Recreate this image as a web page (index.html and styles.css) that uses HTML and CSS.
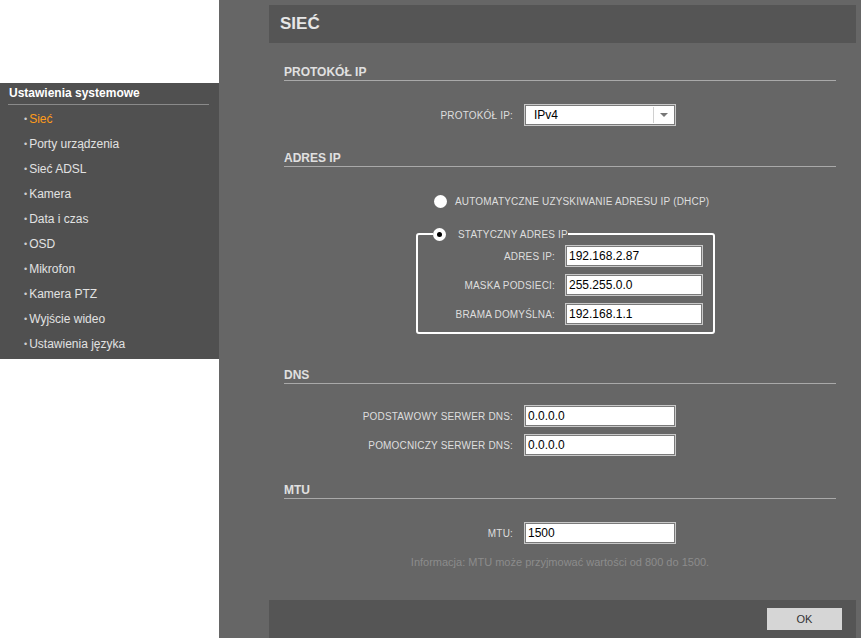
FILE: index.html
```html
<!DOCTYPE html>
<html lang="pl">
<head>
<meta charset="utf-8">
<title>Sieć</title>
<link rel="stylesheet" href="styles.css">
</head>
<body>
<div class="page">
  <aside class="side">
    <nav class="menu">
      <div class="menu-title">Ustawienia systemowe</div>
      <ul class="menu-list">
        <li class="menu-item active">Sieć</li>
        <li class="menu-item">Porty urządzenia</li>
        <li class="menu-item">Sieć ADSL</li>
        <li class="menu-item">Kamera</li>
        <li class="menu-item">Data i czas</li>
        <li class="menu-item">OSD</li>
        <li class="menu-item">Mikrofon</li>
        <li class="menu-item">Kamera PTZ</li>
        <li class="menu-item">Wyjście wideo</li>
        <li class="menu-item">Ustawienia języka</li>
      </ul>
    </nav>
  </aside>
  <main class="main">
    <header class="bar title-bar"><h1 class="title">SIEĆ</h1></header>
    <div class="content">
      <section class="sec sec-proto">
        <h2 class="sec-head">PROTOKÓŁ IP</h2>
        <div class="row row-first">
          <span class="lbl">PROTOKÓŁ IP:</span>
          <div class="select"><span class="select-val">IPv4</span><span class="select-btn"><span class="tri"></span></span></div>
        </div>
      </section>
      <section class="sec sec-addr">
        <h2 class="sec-head">ADRES IP</h2>
        <div class="radio-row">
          <span class="radio"></span><span class="radio-lbl">AUTOMATYCZNE UZYSKIWANIE ADRESU IP (DHCP)</span>
        </div>
        <fieldset class="static">
          <legend class="legend"><span class="radio on"></span><span class="radio-lbl">STATYCZNY ADRES IP</span></legend>
          <div class="frow"><span class="flbl">ADRES IP:</span><div class="field fsmall">192.168.2.87</div></div>
          <div class="frow"><span class="flbl">MASKA PODSIECI:</span><div class="field fsmall">255.255.0.0</div></div>
          <div class="frow"><span class="flbl">BRAMA DOMYŚLNA:</span><div class="field fsmall">192.168.1.1</div></div>
        </fieldset>
      </section>
      <section class="sec sec-dns">
        <h2 class="sec-head">DNS</h2>
        <div class="row row-first">
          <span class="lbl">PODSTAWOWY SERWER DNS:</span>
          <div class="field">0.0.0.0</div>
        </div>
        <div class="row">
          <span class="lbl">POMOCNICZY SERWER DNS:</span>
          <div class="field">0.0.0.0</div>
        </div>
      </section>
      <section class="sec sec-mtu">
        <h2 class="sec-head">MTU</h2>
        <div class="row row-first">
          <span class="lbl">MTU:</span>
          <div class="field">1500</div>
        </div>
        <p class="info">Informacja: MTU może przyjmować wartości od 800 do 1500.</p>
      </section>
    </div>
    <footer class="bar foot-bar"><button class="ok">OK</button></footer>
  </main>
</div>
</body>
</html>
```

FILE: styles.css
```css
* { box-sizing: border-box; }
html, body { margin: 0; padding: 0; }
body {
  font-family: "Liberation Sans", Arial, sans-serif;
  background: #ffffff;
  width: 861px;
  height: 638px;
  overflow: hidden;
}
.page { display: flex; height: 638px; }

.side { width: 219px; flex: none; background: #fff; padding-top: 83px; }
.menu { background: #505050; padding-bottom: 3px; }
.menu-title {
  margin: 0 10px 0 8px;
  padding: 1px 0 2px 1px;
  line-height: 18px;
  font-size: 12px;
  font-weight: bold;
  color: #ffffff;
  border-bottom: 1px solid #8a8a8a;
}
.menu-list { list-style: none; margin: 0; padding: 1px 0 0 0; }
.menu-item {
  display: flex;
  align-items: center;
  height: 25px;
  font-size: 12px;
  color: #e2e2e2;
  padding-left: 24px;
}
.menu-item::before { content: "•"; font-size: 9px; color: #cfcfcf; margin-right: 2px; }
.menu-item.active { color: #ff9c1a; }

.main {
  flex: 1;
  background: #666666;
  display: flex;
  flex-direction: column;
  padding: 5px 5px 0 50px;
}
.bar { background: #555555; }
.title-bar { height: 38px; display: flex; align-items: center; padding-left: 11px; }
.title { margin: 0; font-size: 17px; font-weight: bold; color: #e6e6e6; }

.content { flex: 1; padding: 0 20px 0 15px; }
.sec-head {
  margin: 0;
  font-size: 12px;
  font-weight: bold;
  color: #e0e0e0;
  line-height: 15px;
  border-bottom: 1px solid #a9a9a9;
}
.sec-proto .sec-head { margin-top: 22px; }
.sec-addr .sec-head { margin-top: 25px; }
.sec-dns .sec-head { margin-top: 34px; }
.sec-mtu .sec-head { margin-top: 27px; }

.row { display: flex; align-items: center; gap: 11px; margin-top: 7px; }
.row-first { margin-top: 23px; }
.sec-dns .row-first { margin-top: 21px; }
.lbl { width: 229px; text-align: right; font-size: 10px; letter-spacing: 0.18px; color: #dedede; }

.field, .select {
  width: 152px;
  height: 22px;
  background: #fff;
  border: 1px solid #c8c8c8;
  box-shadow: inset 0 0 0 1px #7a7a7a;
  font-size: 12px;
  line-height: 20px;
  color: #000;
  padding-left: 3px;
}
.select { display: flex; padding-left: 0; }
.select-val { flex: 1; padding-left: 9px; }
.select-btn {
  width: 20px;
  margin: 2px 2px 2px 0;
  border-left: 1px solid #d0d0d0;
  display: flex; align-items: center; justify-content: center;
}
.tri { width: 0; height: 0; border-left: 4px solid transparent; border-right: 4px solid transparent; border-top: 4px solid #777; }

.radio-row { display: flex; align-items: center; margin: 27px 0 0 150px; height: 14px; }
.radio {
  width: 13px; height: 13px; border-radius: 50%;
  background: #fff; flex: none; display: inline-flex; align-items: center; justify-content: center;
}
.radio.on::after { content: ""; width: 5px; height: 5px; border-radius: 50%; background: #000; }
.radio-lbl { font-size: 10px; letter-spacing: 0.18px; color: #dedede; margin-left: 8px; }

.static {
  margin: 19px 0 0 132px;
  width: 298px;
  border: 2px solid #ffffff;
  border-radius: 3px;
  padding: 0 10px 7px 0;
}
.legend { padding: 0; margin-left: 15px; display: flex; align-items: center; height: 14px; }
.legend .radio-lbl { margin-left: 12px; }
.frow { display: flex; align-items: center; gap: 10px; margin-top: 7px; }
.frow:first-of-type { margin-top: 4px; }
.flbl { width: 137px; text-align: right; font-size: 10px; letter-spacing: 0.18px; color: #dedede; }
.fsmall { width: 138px; }

.info { margin: 12px 0 0; text-align: center; font-size: 11px; color: #8c8c8c; }

.foot-bar { height: 38px; display: flex; align-items: center; justify-content: flex-end; padding-right: 14px; }
.ok {
  width: 75px; height: 22px;
  background: #d6d6d6; border: none; padding: 0;
  font-family: "Liberation Sans", Arial, sans-serif; font-size: 11px; color: #333;
}
```
